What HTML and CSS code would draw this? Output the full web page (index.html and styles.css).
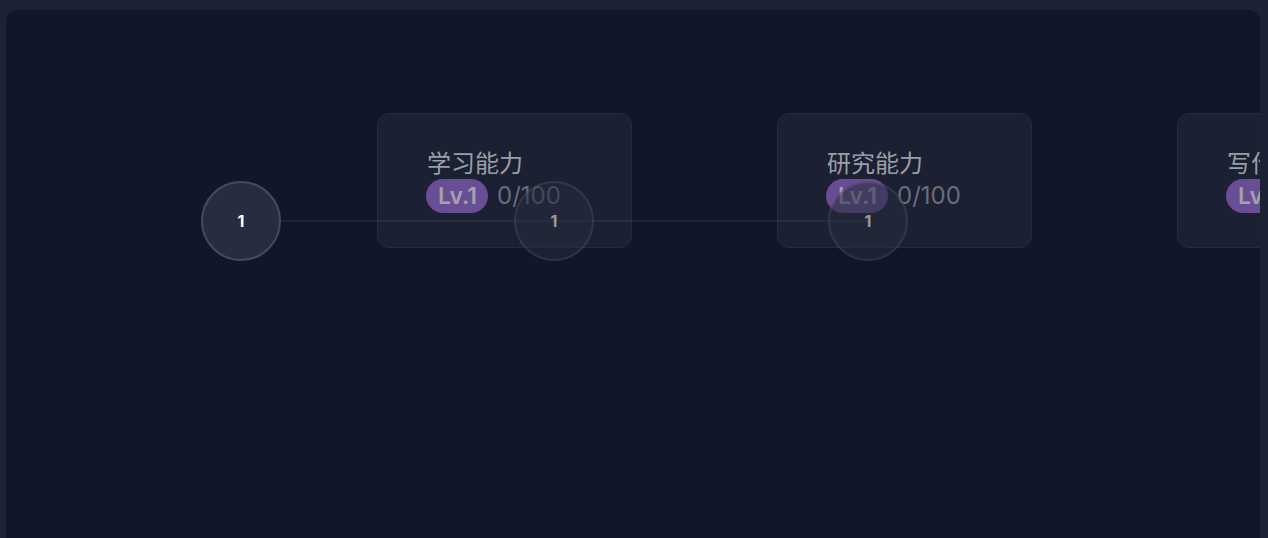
FILE: index.html
```html
<!DOCTYPE html>
<html lang="zh">
<head>
<meta charset="utf-8">
<link rel="stylesheet" href="styles.css">
</head>
<body>
<div class="panel">
  <div class="canvas">
    <div class="card" style="left:371px"><div class="title">学习能力</div><div class="meta"><span class="badge">Lv.1</span><span class="score">0/100</span></div></div>
    <div class="card" style="left:771px"><div class="title">研究能力</div><div class="meta"><span class="badge">Lv.1</span><span class="score">0/100</span></div></div>
    <div class="card" style="left:1171px"><div class="title">写作能力</div><div class="meta"><span class="badge">Lv.1</span><span class="score">0/100</span></div></div>
    <div class="link"></div>
    <div class="node active" style="left:195px">1</div>
    <div class="node dim" style="left:508px">1</div>
    <div class="node dim" style="left:822px">1</div>
  </div>
</div>
</body>
</html>
```

FILE: styles.css
```css
html, body {
  margin: 0;
  padding: 0;
  height: 100%;
  overflow: hidden;
}
body {
  background: #1c2133;
  font-family: Inter, "Noto Sans CJK SC", sans-serif;
}
.panel {
  margin: 10px 8px 0 6px;
  height: 528px;
  background: #11162a;
  border-radius: 12px 12px 0 0;
  overflow: hidden;
}
.canvas {
  position: relative;
  height: 100%;
}
.card {
  position: absolute;
  top: 103px;
  width: 255px;
  height: 135px;
  box-sizing: border-box;
  padding-left: 48px;
  background: #1b2032;
  border: 1px solid #272c3d;
  border-radius: 12px;
  display: flex;
  flex-direction: column;
  justify-content: center;
  gap: 3px;
}
.title {
  font-family: "Noto Sans CJK SC", sans-serif;
  font-size: 24px;
  line-height: 28px;
  padding-left: 1px;
  color: #9b9ea7;
  white-space: nowrap;
}
.meta {
  display: flex;
  align-items: center;
  gap: 9px;
  white-space: nowrap;
}
.badge {
  background: #694e95;
  color: #a3a2ab;
  font-weight: 600;
  font-size: 23px;
  line-height: 34px;
  height: 34px;
  padding: 0 11px 0 12px;
  border-radius: 17px;
}
.score {
  color: #696d7d;
  font-size: 24px;
  font-weight: 400;
  line-height: 34px;
}
.link {
  position: absolute;
  left: 235px;
  top: 210px;
  width: 627px;
  height: 2px;
  background: rgba(255,255,255,0.06);
}
.node {
  position: absolute;
  top: 171px;
  width: 80px;
  height: 80px;
  box-sizing: border-box;
  border-radius: 50%;
  border: 2px solid #454b5d;
  background: #272c3f;
  color: #ffffff;
  font-weight: 700;
  font-size: 16px;
  display: flex;
  align-items: center;
  justify-content: center;
}
.node.dim {
  opacity: 0.55;
}
```
